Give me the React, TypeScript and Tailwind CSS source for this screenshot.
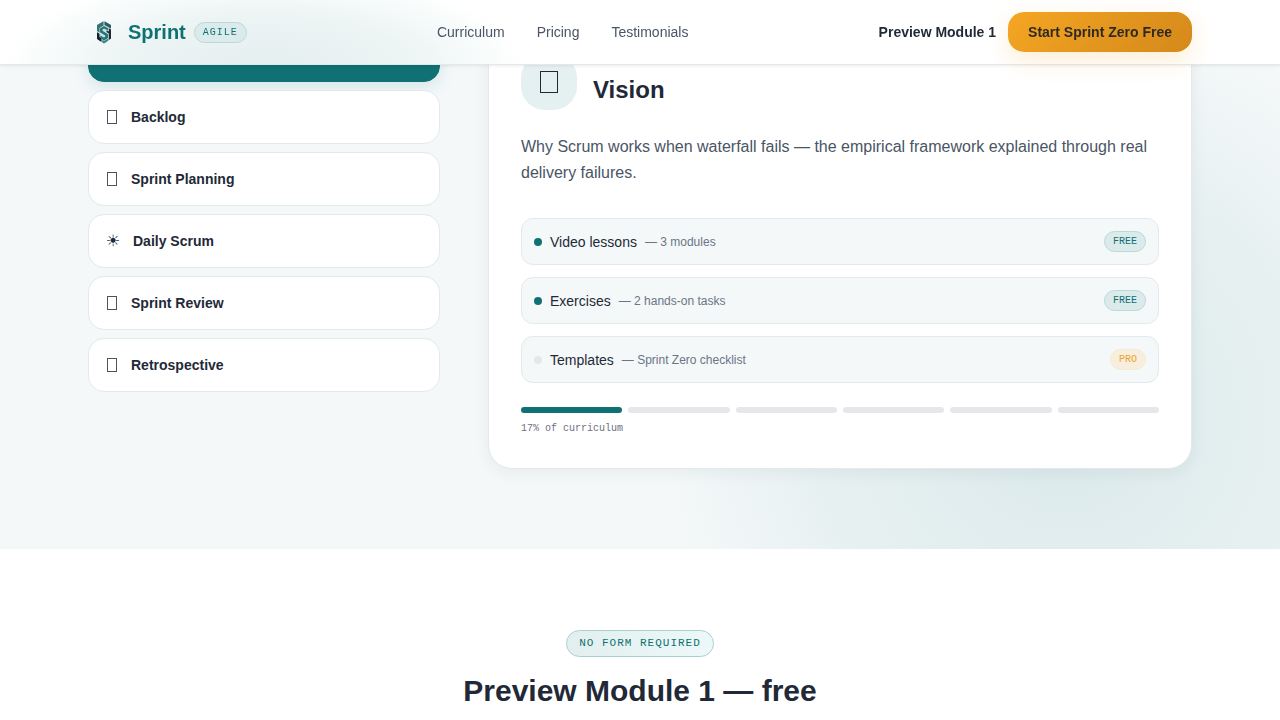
import clsx from "clsx";

const ceremonies = [
  { label: "Vision" },
  { label: "Backlog" },
  { label: "Sprint Planning" },
  { label: "Daily Scrum", sun: true },
  { label: "Sprint Review" },
  { label: "Retrospective" },
];

const lessons = [
  { title: "Video lessons", note: "3 modules", tier: "FREE" },
  { title: "Exercises", note: "2 hands-on tasks", tier: "FREE" },
  { title: "Templates", note: "Sprint Zero checklist", tier: "PRO" },
];

const mono = "font-['Liberation_Mono',monospace]";

function Logo() {
  return (
    <svg viewBox="0 0 32 32" className="size-8" aria-hidden="true">
      <path d="M16 5 L23 9 V23 L16 27.500 L9 23 V9 Z" fill="#cfe0e1" />
      <path d="M15.500 5.300 V9.500 L11.500 12 V16.500 L9 15 V9 Z" fill="#3a7377" />
      <path d="M16.500 5.300 L23 9 V12.500 L20.500 11.200 L16.500 9 Z" fill="#2a5f66" />
      <path d="M20.800 12.300 L23 13.500 V22.500 L20.800 24 V17.500 L18.500 16 V14.500 L20.800 15.500 Z" fill="#1b2b38" />
      <path d="M9 16.200 L11.500 17.800 V21 L13.500 22.300 V26 L9 23 Z" fill="#16202c" />
      <path d="M16 10 L20 12.300 V14.500 L16 12.500 L14.500 13.500 V14.700 L20 18.200 V22 L16 24.400 L12.300 22 V19.500 L16 21.500 L17.200 20.800 V19.500 L12 16.300 V12.500 Z" fill="#24757a" />
      <path d="M14.300 23.800 L16 25 L20.300 22.500 V24.800 L16 27.500 L14.300 26.500 Z" fill="#3a8588" />
    </svg>
  );
}

function Header() {
  return (
    <header className="fixed inset-x-0 top-0 z-10 border-b border-gray-200 bg-white bg-[radial-gradient(260px_90px_at_264px_100%,#e6eff0,#ecf4f4_55%,#ffffff)] shadow-[0_1px_3px_rgba(0,0,0,0.08)]">
      <div className="mx-auto flex h-16 max-w-6xl items-center justify-between px-6">
        <a href="#top" className="flex items-center gap-2">
          <Logo />
          <span className="text-xl font-bold text-[#0f7173]">Sprint</span>
          <span className={clsx(mono, "rounded-full border border-[#bcd9d9] bg-[#dbeaea] px-2 py-0.5 text-[10px] leading-[15px] tracking-[1px] text-[#0f7173]")}>
            AGILE
          </span>
        </a>
        <nav className="flex gap-8 text-sm text-[#4a5565]">
          <a href="#curriculum">Curriculum</a>
          <a href="#pricing">Pricing</a>
          <a href="#testimonials">Testimonials</a>
        </nav>
        <div className="flex items-center gap-3 text-sm font-bold text-[#1f2937]">
          <a href="#preview">Preview Module 1</a>
          <button className="h-10 rounded-2xl bg-linear-135 from-[#f5a623] to-[#d4891a] px-5 text-[#2e2a22] shadow-[0_8px_24px_rgba(245,166,35,0.2)]">
            Start Sprint Zero Free
          </button>
        </div>
      </div>
    </header>
  );
}

function CeremonyTabs() {
  return (
    <div className="flex flex-col gap-2">
      {ceremonies.map((item, index) => (
        <button
          key={item.label}
          className={clsx(
            "flex h-[54px] items-center gap-3 rounded-2xl border px-4 text-left text-sm font-bold",
            index === 0
              ? "border-[#0f7173] bg-[#0f7173] text-white shadow-[0_4px_16px_rgba(15,113,115,0.15)]"
              : "border-[#e3e9ec] bg-white text-[#1f2937]",
          )}
        >
          {item.sun ? (
            <span className="w-4 text-center font-['DejaVu_Sans',sans-serif] text-base font-normal">☀</span>
          ) : (
            <span className="mx-0.5 h-3.5 w-2.5 border border-current opacity-80" />
          )}
          {item.label}
        </button>
      ))}
    </div>
  );
}

function ModuleCard() {
  return (
    <article className="rounded-3xl border border-[#e3e9ec] bg-white p-8 shadow-[0_4px_16px_rgba(31,41,55,0.06)]">
      <div className="flex items-end gap-4">
        <span className="flex size-14 items-center justify-center rounded-3xl bg-[#e5f0f1]">
          <span className="h-[22px] w-[18px] border border-[#1f2937]" />
        </span>
        <h2 className="pb-1 text-2xl font-bold">Vision</h2>
      </div>
      <p className="mt-6 text-base leading-[26px] text-[#4a5565]">
        Why Scrum works when waterfall fails — the empirical framework explained through real delivery failures.
      </p>
      <ul className="mt-8 flex flex-col gap-3">
        {lessons.map((lesson) => (
          <li key={lesson.title} className="flex items-center gap-2 rounded-xl border border-[#e3e9ec] bg-[#f4f8f9] p-3 text-sm">
            <span className={clsx("size-2 rounded-full", lesson.tier === "FREE" ? "bg-[#0f7173]" : "bg-[#e5e7eb]")} />
            <span>{lesson.title}</span>
            <span className="text-xs text-[#6b7585]">— {lesson.note}</span>
            <span
              className={clsx(
                mono,
                "ml-auto rounded-full border px-2 py-0.5 text-[10px] leading-[15px]",
                lesson.tier === "FREE"
                  ? "border-[#bcd9d9] bg-[#dbeaea] text-[#0f7173]"
                  : "border-[#f7ead2] bg-[#f7eedd] text-[#eba52f]",
              )}
            >
              {lesson.tier}
            </span>
          </li>
        ))}
      </ul>
      <div className="mt-6 flex gap-1.5">
        {ceremonies.map((item, index) => (
          <span key={item.label} className={clsx("h-1.5 flex-1 rounded-full", index === 0 ? "bg-[#0f7173]" : "bg-[#e5e7eb]")} />
        ))}
      </div>
      <p className={clsx(mono, "mt-2 text-[10px] leading-[15px] text-[#6b7280]")}>17% of curriculum</p>
    </article>
  );
}

export default function App() {
  return (
    <div id="top" className="h-screen overflow-hidden bg-white font-['Liberation_Sans',Arial,sans-serif] text-[#1f2937]">
      <Header />
      <main>
        <section
          id="curriculum"
          className="bg-[#f4f8f9] bg-[radial-gradient(circle_at_83%_76%,rgba(15,113,115,0.11),rgba(15,113,115,0.06)_240px,transparent_400px)] pt-[21px] pb-20"
        >
          <div className="mx-auto grid max-w-6xl grid-cols-[1fr_2fr] gap-12 px-6">
            <div className="pt-[7px]">
              <CeremonyTabs />
            </div>
            <ModuleCard />
          </div>
        </section>
        <section id="preview" className="flex flex-col items-center px-6 pt-[81px]">
          <span className={clsx(mono, "rounded-full border border-[#a9d0d0] bg-linear-to-r from-[#e3efef] to-[#edf8f8] px-3 py-1 text-[11px] leading-[17px] tracking-[1px] text-[#0f7173]")}>
            NO FORM REQUIRED
          </span>
          <h2 className="mt-4 text-3xl font-bold">Preview Module 1 — free</h2>
        </section>
      </main>
    </div>
  );
}
